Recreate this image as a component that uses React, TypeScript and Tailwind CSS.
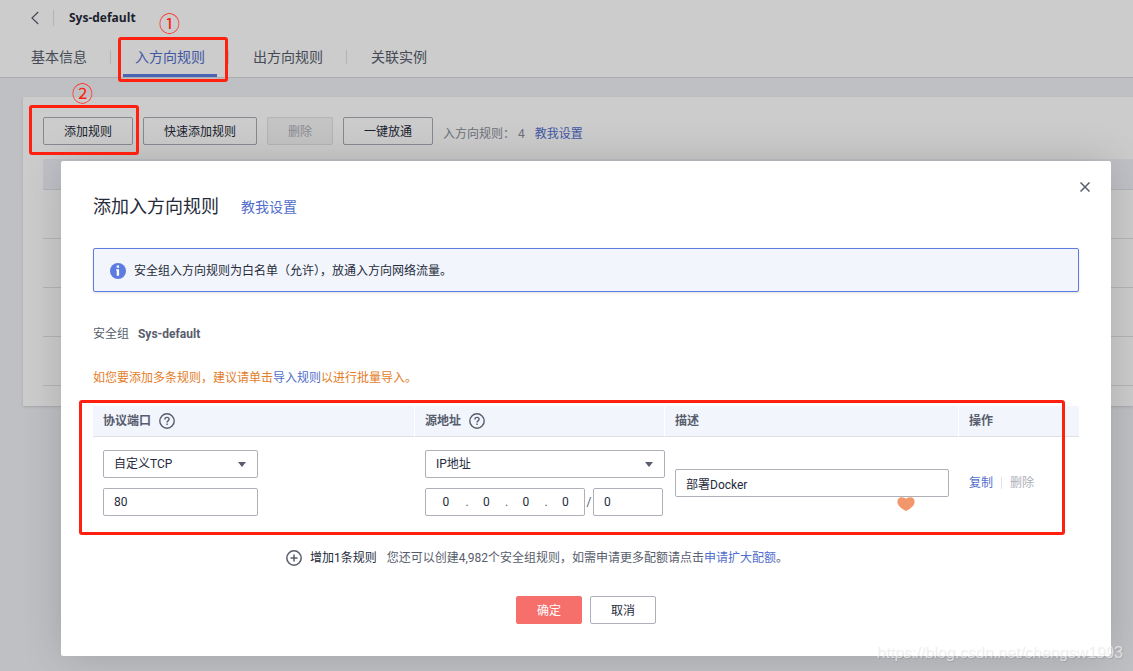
import type { ReactNode } from "react";

const tabs = ["基本信息", "入方向规则", "出方向规则", "关联实例"];
const activeTab = "入方向规则";

const inputClass =
  "h-7 rounded-xs border border-[#adb0b8] bg-white px-2.5 text-xs text-[#252b3a] outline-none focus:border-[#5e7ce0]";

function Marker({ children, className }: { children: ReactNode; className: string }) {
  return (
    <span
      className={`pointer-events-none absolute z-30 font-['Noto_Sans_CJK_SC',sans-serif] text-[21px] leading-5 text-[#ff2010] ${className}`}
    >
      {children}
    </span>
  );
}

function RedBox({ className }: { className: string }) {
  return (
    <span
      aria-hidden="true"
      className={`pointer-events-none absolute z-30 rounded-[3px] border-3 border-[#ff2010] ${className}`}
    />
  );
}

function HelpIcon() {
  return (
    <svg className="size-4" viewBox="0 0 16 16" fill="none" stroke="#575d6c" strokeWidth="1.4">
      <circle cx="8" cy="8" r="7.2" />
      <path d="M5.9 6.5c0-1.3.9-2.1 2.1-2.1s2.1.8 2.1 1.9c0 1.5-2.1 1.6-2.1 3.2" />
      <path d="M8 10.5v1.6" />
    </svg>
  );
}

function Select({ label, value, className }: { label: string; value: string; className: string }) {
  return (
    <div className={`relative ${className}`}>
      <select aria-label={label} className={`${inputClass} w-full appearance-none`}>
        <option>{value}</option>
      </select>
      <svg
        className="pointer-events-none absolute top-3 right-3 h-[5px] w-2"
        viewBox="0 0 8 5"
        fill="#575d6c"
      >
        <path d="M0 0h8L4 5z" />
      </svg>
    </div>
  );
}

function PageHeader() {
  return (
    <header className="border-b border-[#d6d8dc] bg-white">
      <div className="flex h-9 items-center pl-[31px]">
        <button type="button" aria-label="返回">
          <svg className="h-3.5 w-2" viewBox="0 0 8 14" fill="none" stroke="#575d6c" strokeWidth="1.2">
            <path d="M7.2 1 1 7l6.2 6" />
          </svg>
        </button>
        <span className="mr-[15px] ml-3.5 h-4 w-px bg-[#dfe1e6]" />
        <h1 className="font-['Open_Sans',sans-serif] text-xs font-bold text-[#252b3a]">Sys-default</h1>
      </div>
      <nav className="flex h-[41px] items-center pl-[19px] text-sm">
        {tabs.map((tab, i) => (
          <div key={tab} className="flex h-full items-center">
            {i > 0 && <span className="mr-3 ml-[11px] h-3.5 w-px bg-[#dfe1e6]" />}
            <a
              href="#"
              className={
                tab === activeTab
                  ? "flex h-full items-center border-b-3 border-[#5e7ce0] px-3 pt-1 text-[#526ecc]"
                  : "flex h-full items-center px-3 pt-px"
              }
            >
              {tab}
            </a>
          </div>
        ))}
      </nav>
    </header>
  );
}

function RuleList() {
  const button = "h-7 rounded-xs border border-[#a9acb6] px-5 pt-px text-xs text-[#252b3a]";
  return (
    <main className="mt-[19px] ml-[23px] bg-white pt-5 pb-5 pl-5 shadow-sm">
      <div className="flex items-center gap-2.5 text-xs">
        <button type="button" className={button}>
          添加规则
        </button>
        <button type="button" className={button}>
          快速添加规则
        </button>
        <button
          type="button"
          disabled
          className="h-7 rounded-xs border border-[#dfe1e6] bg-[#f5f5f6] px-5 pt-px text-xs text-[#adb0b8]"
        >
          删除
        </button>
        <button type="button" className={button}>
          一键放通
        </button>
        <span className="flex items-center pt-1.5 text-[#8a8e99]">
          入方向规则：
          <span className="mr-2.5 ml-[3px]">4</span>
          <a href="#" className="text-[#526ecc]">
            教我设置
          </a>
        </span>
      </div>
      <div className="mt-3.5 h-[31px] border-b border-[#dfe1e6] bg-[#f0f2f9]" />
      {[1, 2, 3, 4].map((row) => (
        <div key={row} className="h-[49px] border-b border-[#dfe1e6]" />
      ))}
    </main>
  );
}

function RuleTable() {
  const th = "h-[31px] border-r border-white pl-2.5 text-left font-bold";
  return (
    <div className="relative mt-5">
      <table className="w-full table-fixed border-separate border-spacing-0 text-xs">
        <colgroup>
          <col className="w-[322px]" />
          <col className="w-[250px]" />
          <col className="w-[294px]" />
          <col />
        </colgroup>
        <thead className="bg-[#f2f5fc] text-[#575d6c]">
          <tr className="[&>th]:border-b [&>th]:border-b-[#dfe1e6]">
            <th className={th}>
              <span className="flex items-center gap-2">
                协议端口 <HelpIcon />
              </span>
            </th>
            <th className={th}>
              <span className="flex items-center gap-2">
                源地址 <HelpIcon />
              </span>
            </th>
            <th className={th}>描述</th>
            <th className="pl-2.5 text-left font-bold">操作</th>
          </tr>
        </thead>
        <tbody>
          <tr className="[&>td]:py-[13px] [&>td]:pl-2.5">
            <td>
              <div className="flex flex-col gap-2.5">
                <Select label="协议" value="自定义TCP" className="w-[155px]" />
                <input aria-label="端口" defaultValue="80" className={`${inputClass} w-[155px]`} />
              </div>
            </td>
            <td>
              <div className="flex flex-col gap-2.5">
                <Select label="源地址类型" value="IP地址" className="w-full" />
                <div className="flex items-center">
                  <div className="flex h-7 w-40 items-center rounded-xs border border-[#adb0b8]">
                    {[0, 1, 2, 3].map((n) => (
                      <span key={n} className="flex flex-1 items-center">
                        {n > 0 && <span className="w-0.5 text-[#575d6c]">.</span>}
                        <input
                          aria-label={`IP ${n + 1}`}
                          defaultValue="0"
                          className="w-full min-w-0 text-center text-[#252b3a] outline-none"
                        />
                      </span>
                    ))}
                  </div>
                  <span className="w-2 text-center">/</span>
                  <input aria-label="掩码" defaultValue="0" className={`${inputClass} w-[70px]`} />
                </div>
              </div>
            </td>
            <td className="pr-2.5">
              <div className="relative">
                <input aria-label="描述" defaultValue="部署Docker" className={`${inputClass} w-full`} />
                <svg
                  className="absolute top-7 right-[34px] h-3.5 w-[18px]"
                  viewBox="0 0 18 14"
                  fill="#f2976c"
                >
                  <path d="M9 14C5.5 12.2.4 8.8.4 4.7.4 1.9 2.2.3 4.6.3 6.7.3 8.2 1 9 2 9.8 1 11.3.3 13.4.3c2.4 0 4.2 1.6 4.2 4.4C17.6 8.8 12.5 12.2 9 14z" />
                </svg>
              </div>
            </td>
            <td>
              <div className="flex items-center">
                <a href="#" className="text-[#526ecc]">
                  复制
                </a>
                <span className="mx-2 h-3 w-px bg-[#dfe1e6]" />
                <button type="button" disabled className="text-[#adb0b8]">
                  删除
                </button>
              </div>
            </td>
          </tr>
        </tbody>
      </table>
      <RedBox className="-top-1.5 right-3.5 -bottom-1.5 -left-3.5" />
    </div>
  );
}

function AddRuleDialog() {
  return (
    <section
      role="dialog"
      aria-label="添加入方向规则"
      className="relative rounded-xs bg-white px-8 pt-[34px] pb-8 shadow-[0_0_40px_rgba(0,0,0,0.16)]"
    >
      <button type="button" aria-label="关闭" className="absolute top-[21px] right-[21px]">
        <svg className="size-2.5" viewBox="0 0 10 10" stroke="#575d6c" strokeWidth="1.5">
          <path d="M.5.5l9 9M9.5.5l-9 9" />
        </svg>
      </button>
      <div className="flex items-center">
        <h2 className="text-lg leading-6 text-[#252b3a]">添加入方向规则</h2>
        <a href="#" className="ml-[22px] text-sm text-[#526ecc]">
          教我设置
        </a>
      </div>

      <div className="mt-[29px] flex h-11 items-center rounded-xs border border-[#5e7ce0] bg-[#f2f5fc] pt-px pl-4 text-xs text-[#252b3a] shadow-sm">
        <svg className="mr-2 size-4" viewBox="0 0 16 16">
          <circle cx="8" cy="8" r="8" fill="#5e7ce0" />
          <path d="M6.7 2.6h2.4v2.2H6.7zM6.1 6.2h3v6.6H6.7V7.6h-.6z" fill="#fff" />
        </svg>
        安全组入方向规则为白名单（允许），放通入方向网络流量。
      </div>

      <p className="mt-[34px] text-xs">
        安全组 <strong className="ml-1.5">Sys-default</strong>
      </p>
      <p className="mt-7 text-xs text-[#e37d29]">
        如您要添加多条规则，建议请单击
        <a href="#" className="text-[#526ecc]">
          导入规则
        </a>
        以进行批量导入。
      </p>

      <RuleTable />

      <div className="mt-[21px] ml-[193px] flex items-center text-xs">
        <button type="button" className="mr-2.5 flex items-center gap-2 text-[#252b3a]">
          <svg className="size-4" viewBox="0 0 16 16" fill="none" stroke="#575d6c" strokeWidth="1.5">
            <circle cx="8" cy="8" r="7.2" />
            <path d="M4.5 8h7M8 4.5v7" />
          </svg>
          增加1条规则
        </button>
        <span>
          您还可以创建4,982个安全组规则，如需申请更多配额请点击
          <a href="#" className="text-[#526ecc]">
            申请扩大配额
          </a>
          。
        </span>
      </div>

      <div className="mt-[30px] flex justify-center gap-2 text-xs">
        <button type="button" className="h-7 rounded-xs border border-[#f66f6a] bg-[#f66f6a] px-5 pt-px text-white">
          确定
        </button>
        <button type="button" className="h-7 rounded-xs border border-[#adb0b8] px-5 pt-px text-[#252b3a]">
          取消
        </button>
      </div>
    </section>
  );
}

export default function App() {
  return (
    <div className="relative min-h-screen overflow-hidden bg-[#eff0f5] font-[Roboto,'Noto_Sans_CJK_SC',sans-serif] text-[#575d6c]">
      <PageHeader />
      <RuleList />

      <div className="absolute inset-0 z-20 bg-black/20 pt-[161px] pr-[22px] pl-[61px]">
        <AddRuleDialog />
      </div>

      {/* Step markers sit above the overlay */}
      <Marker className="top-3 left-[159px]">①</Marker>
      <RedBox className="top-[37px] left-[118px] h-[45px] w-[110px]" />
      <Marker className="top-[82px] left-[72px]">②</Marker>
      <RedBox className="top-[105px] left-[29px] h-[50px] w-[110px]" />

      <span className="absolute right-2.5 bottom-1.5 z-30 font-['Liberation_Sans',sans-serif] text-base text-white/60 [text-shadow:1px_1px_1px_rgba(0,0,0,0.1)]">
        https://blog.csdn.net/chengsw1993
      </span>
    </div>
  );
}
